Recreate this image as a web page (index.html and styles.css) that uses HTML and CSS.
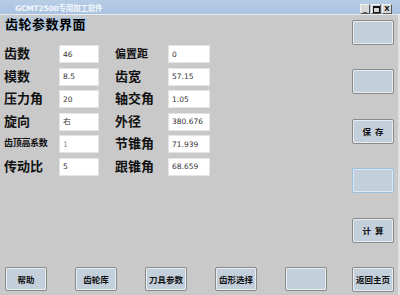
FILE: index.html
```html
<!DOCTYPE html>
<html lang="zh">
<head>
    <meta charset="UTF-8">
    <title>GCMT2500专用加工软件</title>
    <link rel="stylesheet" href="styles.css">
</head>
<body>
    <div class="window">
        <div class="titlebar">
            <span class="title">GCMT2500专用加工软件</span>
            <div class="win-btns">
                <span class="win-btn">_</span>
                <span class="win-btn"><span class="max-box"></span></span>
                <span class="win-btn">X</span>
            </div>
        </div>
        <div class="client">
            <div class="left">
                <h2 class="heading">齿轮参数界面</h2>
                <div class="params">
                    <label>齿数</label>
                    <input type="text" value="46">
                    <label class="mid">偏置距</label>
                    <input type="text" value="0">

                    <label>模数</label>
                    <input type="text" value="8.5">
                    <label>齿宽</label>
                    <input type="text" value="57.15">

                    <label>压力角</label>
                    <input type="text" value="20">
                    <label>轴交角</label>
                    <input type="text" value="1.05">

                    <label>旋向</label>
                    <input type="text" value="右">
                    <label>外径</label>
                    <input type="text" value="380.676">

                    <label class="small">齿顶高系数</label>
                    <input type="text" class="dim" value="1">
                    <label>节锥角</label>
                    <input type="text" value="71.939">

                    <label>传动比</label>
                    <input type="text" value="5">
                    <label>跟锥角</label>
                    <input type="text" value="68.659">
                </div>
                <div class="bottom-row">
                    <button class="btn">帮助</button>
                    <button class="btn">齿轮库</button>
                    <button class="btn">刀具参数</button>
                    <button class="btn">齿形选择</button>
                    <button class="btn"></button>
                </div>
            </div>
            <div class="right">
                <button class="btn tall"></button>
                <button class="btn tall"></button>
                <button class="btn tall">保&nbsp;&nbsp;存</button>
                <button class="btn tall focus"></button>
                <button class="btn tall">计&nbsp;&nbsp;算</button>
                <button class="btn tall">返回主页</button>
            </div>
        </div>
    </div>
</body>
</html>
```

FILE: styles.css
```css
body {
    margin: 0;
    font-family: "Noto Sans CJK SC", sans-serif;
}
.window {
    width: 400px;
    height: 295px;
    display: flex;
    flex-direction: column;
    background-color: #c9c9c9;
    overflow: hidden;
}
.titlebar {
    height: 14px;
    background: linear-gradient(#b7cde6, #a9c3e0);
    border-bottom: 1px solid #e6ecf2;
    display: flex;
    align-items: center;
    justify-content: space-between;
    padding: 0 8px 0 15px;
    flex-shrink: 0;
}
.title {
    color: #f4f7fb;
    font-family: "DejaVu Sans", "Noto Sans CJK SC", sans-serif;
    font-size: 7.5px;
    font-weight: bold;
    letter-spacing: -0.2px;
}
.win-btns {
    display: flex;
    gap: 1px;
    margin-top: 4px;
}
.win-btn {
    width: 8px;
    height: 8px;
    background-color: #d8d8d8;
    border: 1px solid #f2f2f2;
    border-right-color: #555;
    border-bottom-color: #555;
    font-family: "DejaVu Sans", sans-serif;
    font-size: 7px;
    font-weight: bold;
    line-height: 8px;
    text-align: center;
    color: #111;
    display: flex;
    align-items: center;
    justify-content: center;
}
.max-box {
    width: 5px;
    height: 4px;
    border: 1px solid #111;
    border-top-width: 2px;
}
.client {
    flex: 1;
    display: flex;
    border-right: 2px solid #e2e2e2;
}
.left {
    flex: 1;
    display: flex;
    flex-direction: column;
    padding: 2px 0 4px 4px;
}
.heading {
    margin: 0;
    align-self: flex-start;
    background-color: #b7cadd;
    font-size: 13px;
    font-weight: bold;
    line-height: 14px;
    padding: 0 1px;
    letter-spacing: 0.5px;
}
.params {
    margin-top: 14px;
    display: grid;
    grid-template-columns: 55px 40px 69px 42px;
    grid-auto-rows: 18px;
    row-gap: 4.6px;
}
.params label {
    font-size: 13px;
    font-weight: bold;
    line-height: 16px;
    color: #111;
    white-space: nowrap;
}
.params label:nth-child(4n+3) {
    padding-left: 16px;
}
.params label.mid {
    font-size: 11px;
}
.params label.small {
    font-size: 9px;
    letter-spacing: -0.3px;
}
.params input {
    width: 100%;
    height: 18px;
    box-sizing: border-box;
    border: 1px solid #e4e4e4;
    background-color: #fff;
    font-family: "DejaVu Sans", sans-serif;
    font-size: 7.5px;
    color: #333;
    padding: 0 3px;
    margin: 0;
}
.params input.dim {
    color: #888;
}
.bottom-row {
    margin-top: auto;
    display: flex;
    gap: 28px;
    padding-left: 1px;
}
.btn {
    width: 42px;
    height: 24px;
    padding: 0;
    background-color: #c3d0dc;
    border: 1px solid #8a8a8a;
    border-radius: 2px;
    box-shadow: inset 0 0 0 1px #e8edf2;
    font-family: "Noto Sans CJK SC", sans-serif;
    font-size: 8.5px;
    font-weight: bold;
    color: #111;
}
.btn.tall {
    height: 25px;
}
.btn.focus {
    border-color: #9cc0dc;
    box-shadow: inset 0 0 0 1px #dce9f4;
}
.right {
    display: flex;
    flex-direction: column;
    gap: 24.4px;
    padding: 5px 4px 0 2px;
}
```
